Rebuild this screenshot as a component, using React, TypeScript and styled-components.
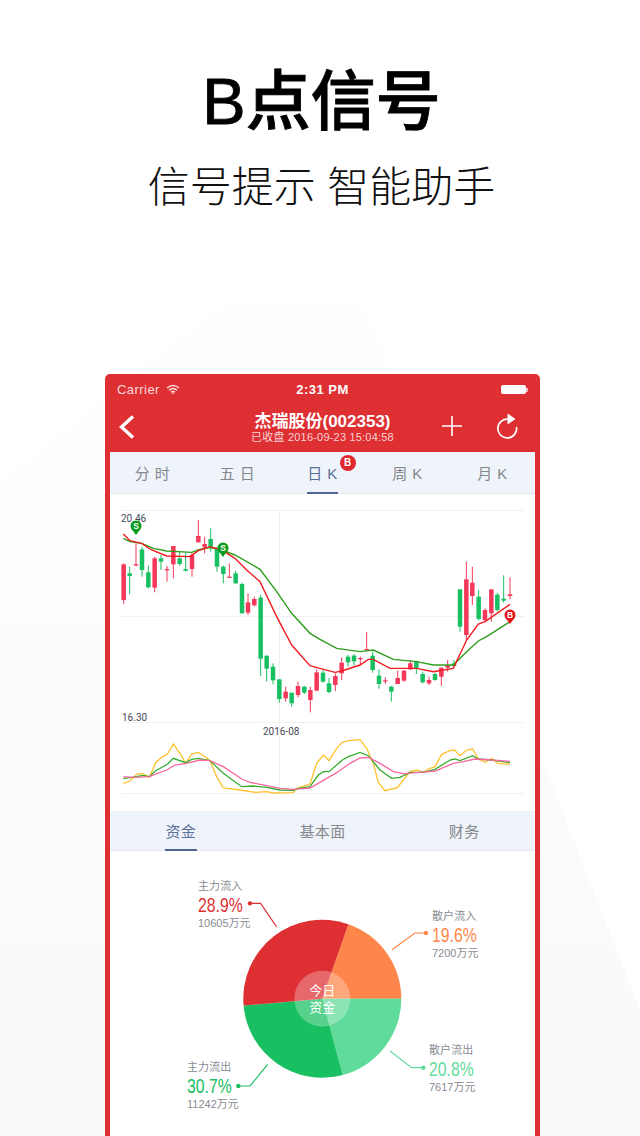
import React from "react";
import styled, { createGlobalStyle } from "styled-components";

const Global = createGlobalStyle`
  html, body { margin: 0; padding: 0; background: #fff; }
  body { font-family: "Liberation Sans", "Noto Sans CJK SC", sans-serif; }
`;

const Page = styled.div`
  position: relative;
  width: 640px;
  height: 1136px;
  overflow: hidden;
  display: flex;
  flex-direction: column;
  background: #fff;
  &::before {
    content: "";
    position: absolute;
    inset: 0;
    background: linear-gradient(180deg, #fff 19%, #fdfdfd 45%, #fafafa 85%);
    clip-path: polygon(330px 215px, 640px 1010px, 640px 1136px, 0 1136px, 0 484px);
  }
`;
const Hero = styled.header`
  position: relative;
  display: flex;
  flex-direction: column;
  align-items: center;
  padding: 62px 0 0 3px;
  height: 374px;
  box-sizing: border-box;
`;
const Title = styled.h1`
  margin: 0;
  font: 500 65px/80px "Liberation Sans", "Noto Sans CJK SC", sans-serif;
  -webkit-text-stroke: 0.9px #000;
  color: #000;
`;
const Subtitle = styled.h2`
  margin: 0;
  padding-top: 16px;
  font: 300 42px/60px "Liberation Sans", "Noto Sans CJK SC", sans-serif;
  color: #111;
`;
const Phone = styled.section`
  position: relative;
  width: 435px;
  margin-left: 105px;
  flex: 1;
  box-sizing: border-box;
  background: #de2f32;
  border-radius: 5px 5px 0 0;
  padding: 0 5px;
  display: flex;
  flex-direction: column;
`;
const StatusBar = styled.div`
  height: 31px;
  margin: 0 -5px;
  padding: 0 12px;
  display: grid;
  grid-template-columns: 1fr auto 1fr;
  align-items: center;
  color: #fff;
  font-size: 13px;
`;
const Carrier = styled.div`
  display: flex;
  align-items: center;
  gap: 6px;
  color: #fbdcdc;
  letter-spacing: 0.45px;
`;
const Clock = styled.div`
  font-weight: 700;
  letter-spacing: 0.5px;
  font-size: 13px;
`;
const Battery = styled.div`
  justify-self: end;
  display: flex;
  align-items: center;
  &::before {
    content: "";
    width: 25px;
    height: 9px;
    background: #fff;
    border-radius: 2px;
  }
  &::after {
    content: "";
    width: 2px;
    height: 4px;
    background: #f3b5b5;
  }
`;
const NavBar = styled.div`
  height: 47px;
  position: relative;
  display: flex;
  flex-direction: column;
  align-items: center;
  color: #fff;
  padding-top: 7px;
  box-sizing: border-box;
`;
const NavTitle = styled.div`
  font-size: 17px;
  font-weight: 700;
  line-height: 19px;
`;
const NavSub = styled.div`
  font-size: 11px;
  line-height: 12px;
  letter-spacing: 0.2px;
  color: #f9d2d2;
`;
const NavIcon = styled.svg<{ $left: number; $top: number }>`
  position: absolute;
  left: ${(p) => p.$left}px;
  top: ${(p) => p.$top}px;
`;
const Content = styled.div`
  flex: 1;
  background: #fff;
  display: flex;
  flex-direction: column;
`;
const Tabs = styled.div<{ $cols: number; $h: number }>`
  display: grid;
  grid-template-columns: repeat(${(p) => p.$cols}, 1fr);
  height: ${(p) => p.$h}px;
  background: #eff3fa;
  border-bottom: 1px solid #e4e7ee;
  box-sizing: border-box;
`;
const Tab = styled.div<{ $active?: boolean }>`
  position: relative;
  display: flex;
  align-items: center;
  justify-content: center;
  font-size: 15px;
  letter-spacing: 0.4px;
  color: ${(p) => (p.$active ? "#5a6f9c" : "#85888d")};
`;
const Underline = styled.span<{ $w: number }>`
  position: absolute;
  bottom: -1px;
  left: 50%;
  width: ${(p) => p.$w}px;
  margin-left: ${(p) => -p.$w / 2}px;
  height: 2px;
  background: #4f6596;
`;
const Badge = styled.span`
  position: absolute;
  left: 50%;
  top: 3px;
  margin-left: 17px;
  width: 16px;
  height: 16px;
  border-radius: 50%;
  background: #e0282e;
  color: #fff;
  font-size: 10px;
  font-weight: 700;
  line-height: 16px;
  text-align: center;
  letter-spacing: 0;
`;
const ChartSvg = styled.svg`
  display: block;
  width: 425px;
  height: 317px;
  flex: none;
`;
const AxisText = styled.text`
  font: 10px "Roboto", "Liberation Sans", sans-serif;
  fill: #444a55;
`;
const PieArea = styled.div`
  position: relative;
  flex: 1;
`;
const PieSvg = styled.svg`
  display: block;
  width: 425px;
  height: 285px;
`;
const PieCaption = styled.text`
  font: 13px "Noto Sans CJK SC", sans-serif;
  fill: #fff;
  text-anchor: middle;
`;
const Label = styled.div<{ $left: number; $top: number }>`
  position: absolute;
  left: ${(p) => p.$left}px;
  top: ${(p) => p.$top}px;
  display: flex;
  flex-direction: column;
  color: #888c93;
`;
const LabelName = styled.div`
  font-size: 11px;
  line-height: 18px;
  letter-spacing: 0.1px;
`;
const LabelPct = styled.div<{ $color: string }>`
  font: 21px/19px "Liberation Sans", sans-serif;
  color: ${(p) => p.$color};
  transform: scaleX(0.75);
  transform-origin: left center;
  white-space: nowrap;
`;
const LabelAmount = styled.div`
  font-size: 11px;
  line-height: 19px;
`;

const z = (x: number, y: number): [number, number] => [110 + x / 3, 500 + y / 3];
const pts = (a: number[][], ox = 0) => a.map(([x, y]) => z(x + ox, y).join(",")).join(" ");
const GREEN = "#18c061";
const RED = "#f5385a";

type C = [number, number, number, number, number, number];
const left: C[] = [
  [41,190,312,193,300,1],[59,200,283,220,228,0],[78,130,198,193,197,1],[96,140,230,148,210,0],[115,197,265,217,262,0],
  [134,170,277,175,263,1],[153,165,210,175,185,0],[171,198,245,207,211,1],[190,138,235,138,193,1],[209,155,197,175,192,0],
  [227,158,215,207,212,0],[246,160,230,165,207,1],[265,60,127,108,127,1],[284,110,160,132,142,1],[302,85,155,117,145,0],
  [321,140,215,145,200,0],[340,197,250,200,222,0],[358,190,233,230,233,1],[377,213,252,220,250,0],[396,248,340,252,340,0],
  [414,280,345,307,338,1],[433,290,320,297,316,1],[452,285,528,293,476,0],[470,467,545,467,506,0],[489,490,553,500,541,0],
  [508,538,608,538,597,0],[527,560,605,575,595,1],[545,578,620,578,610,0],[564,545,592,558,585,1],[583,558,582,560,578,0],
  [601,560,637,570,600,1],[620,508,572,517,572,1],
];
const right: C[] = [
  [9,510,548,518,545,0],[27,535,580,550,576,0],[46,520,573,528,555,1],[65,472,540,488,520,1],[84,465,500,470,487,0],
  [102,462,497,467,484,0],[121,470,493,474,477,1],[140,396,450,447,450,1],[158,455,518,467,510,0],[177,508,566,527,552,0],
  [196,532,552,541,544,1],[214,558,605,560,575,0],[233,512,552,534,552,1],[252,510,545,512,542,1],[271,480,510,490,508,1],
  [289,482,522,484,505,0],[308,515,550,522,547,0],[327,530,555,540,550,1],[345,518,542,522,540,0],[364,503,558,503,530,1],
  [383,480,515,495,503,1],[402,480,500,490,498,0],[420,268,395,268,380,0],[439,185,420,238,405,1],[457,200,315,248,288,1],
  [476,270,362,290,357,0],[495,325,365,330,360,1],[514,268,365,268,340,1],[532,278,335,284,330,0],[551,226,308,296,302,0],
  [570,232,298,283,288,1],
];
const candles: C[] = [...left, ...right.map((c) => [c[0] + 630, c[1], c[2], c[3], c[4], c[5]] as C)];

const maRed = [[40,102],[60,122],[95,130],[125,150],[170,168],[240,170],[265,152],[300,140],[335,150],[375,175],[410,210],[450,245],[500,350],[545,435],[600,497],[630,505],[675,517],[695,513],[750,495],[775,478],[790,478],[840,505],[920,505],[970,515],[1030,505],[1070,420],[1105,372],[1125,365],[1200,313]];
const maGreen = [[40,115],[60,125],[95,130],[130,145],[170,153],[245,157],[265,150],[300,142],[335,150],[375,165],[450,208],[500,275],[545,340],[600,400],[630,418],[680,445],[750,455],[790,450],[850,478],[920,485],[970,495],[1030,495],[1070,455],[1105,423],[1130,410],[1200,365]];

const zs = (x: number, y: number) => `${110 + x / 3},${720 + y / 3}`;
const poly = (a: number[][]) => a.map(([x, y]) => zs(x, y)).join(" ");
const subYellow = [[40,190],[60,183],[80,163],[97,160],[118,172],[137,128],[155,112],[172,103],[190,72],[210,100],[227,130],[245,102],[265,97],[285,110],[300,122],[320,170],[340,204],[390,210],[435,217],[470,215],[490,219],[550,218],[560,205],[600,192],[620,130],[640,105],[657,122],[680,85],[697,67],[715,62],[750,59],[770,85],[790,130],[805,187],[825,212],[862,203],[900,155],[920,150],[940,157],[955,147],[975,140],[995,103],[1020,92],[1033,90],[1050,107],[1070,90],[1088,87],[1105,117],[1125,127],[1145,115],[1163,130],[1200,133]];
const subGreen = [[40,176],[80,170],[97,166],[118,170],[137,152],[172,133],[190,115],[227,128],[245,118],[265,115],[300,122],[340,160],[395,200],[430,198],[470,202],[510,210],[550,211],[565,205],[600,200],[625,165],[640,155],[657,155],[697,120],[715,110],[750,97],[775,107],[810,150],[845,175],[870,172],[900,157],[940,157],[975,148],[1020,120],[1033,117],[1050,122],[1088,107],[1105,117],[1145,120],[1200,128]];
const subPink = [[40,170],[70,172],[118,170],[170,150],[195,135],[230,130],[270,120],[300,122],[340,140],[395,177],[420,187],[470,197],[510,205],[550,208],[600,204],[650,175],[680,158],[720,130],[750,114],[775,112],[810,130],[850,155],[880,161],[920,158],[975,153],[1030,130],[1060,125],[1095,117],[1145,120],[1200,124]];

function Pin({ x, y, color, letter }: { x: number; y: number; color: string; letter: string }) {
  return (
    <g>
      <path d={`M${x - 4.4} ${y + 3} L${x} ${y + 9} L${x + 4.4} ${y + 3} Z`} fill={color} />
      <circle cx={x} cy={y} r={5.5} fill={color} />
      <text x={x} y={y + 3} fontSize={8.5} fontWeight={700} fill="#fff" textAnchor="middle" fontFamily="Liberation Sans">{letter}</text>
    </g>
  );
}

const CX = 212.3;
const CY = 147.7;
const R = 79;
const wedge = (a: number, b: number) => {
  const p = (d: number) => [CX + R * Math.sin((d * Math.PI) / 180), CY - R * Math.cos((d * Math.PI) / 180)];
  const [x1, y1] = p(a);
  const [x2, y2] = p(b);
  return `M${CX} ${CY} L${x1} ${y1} A${R} ${R} 0 ${b - a > 180 ? 1 : 0} 1 ${x2} ${y2} Z`;
};
const lz = (x: number, y: number) => [60 + x / 3, 20 + y / 3];
const leader = (a: number[][]) => a.map(([x, y]) => lz(x, y).join(",")).join(" ");

const leaders = [
  { c: "#de2f32", p: [[240,97],[272,97],[320,168]] },
  { c: "#ff864a", p: [[768,186],[735,186],[666,236]] },
  { c: "#5fdb9b", p: [[760,590],[725,590],[660,540]] },
  { c: "#18c061", p: [[205,645],[240,645],[293,580]] },
];

const labels = [
  { n: "主力流入", pct: "28.9%", a: "10605万元", c: "#de2f32", x: 88, y: 26 },
  { n: "散户流入", pct: "19.6%", a: "7200万元", c: "#ff864a", x: 322, y: 56 },
  { n: "散户流出", pct: "20.8%", a: "7617万元", c: "#5fdb9b", x: 319, y: 190 },
  { n: "主力流出", pct: "30.7%", a: "11242万元", c: "#18c061", x: 77, y: 207 },
];

export default function App() {
  return (
    <Page>
      <Global />
      <Hero>
        <Title>B点信号</Title>
        <Subtitle>信号提示 智能助手</Subtitle>
      </Hero>
      <Phone>
        <StatusBar>
          <Carrier>
            Carrier
            <svg width="14" height="11" viewBox="0 0 14 11">
              <path d="M1 4 Q7 -1 13 4 M3 6.2 Q7 2.8 11 6.2 M5 8.2 Q7 6.6 9 8.2" fill="none" stroke="#fbdcdc" strokeWidth="1.4" />
              <path d="M5.8 9 L7 10.4 L8.2 9 Q7 8 5.8 9Z" fill="#fbdcdc" />
            </svg>
          </Carrier>
          <Clock>2:31 PM</Clock>
          <Battery />
        </StatusBar>
        <NavBar>
          <NavIcon $left={5} $top={9} width="22" height="26" viewBox="0 0 22 26">
            <path d="M18 2.5 L6.5 13 L18 23.5" fill="none" stroke="#fff" strokeWidth="3.4" />
          </NavIcon>
          <NavTitle>杰瑞股份(002353)</NavTitle>
          <NavSub>已收盘 2016-09-23 15:04:58</NavSub>
          <NavIcon $left={326} $top={9} width="32" height="24" viewBox="0 0 32 24">
            <path d="M16 2 V22 M6 12 H26" fill="none" stroke="#fff" strokeWidth="1.6" />
          </NavIcon>
          <NavIcon $left={383} $top={6} width="28" height="28" viewBox="0 0 28 28">
            <path d="M15.5 8.2 A9.4 9.4 0 1 0 23.5 16" fill="none" stroke="#fff" strokeWidth="1.7" />
            <path d="M14.5 2.5 L22.5 8 L14.5 13.5 Z" fill="#fff" />
          </NavIcon>
        </NavBar>
        <Content>
          <Tabs $cols={5} $h={42}>
            <Tab>分 时</Tab>
            <Tab>五 日</Tab>
            <Tab $active>
              日 K<Badge>B</Badge>
              <Underline $w={31} />
            </Tab>
            <Tab>周 K</Tab>
            <Tab>月 K</Tab>
          </Tabs>
          <ChartSvg viewBox="110 494 425 317">
            <g stroke="#f1f1f2" strokeWidth="1">
              <line x1="122" x2="524" y1="510.5" y2="510.5" />
              <line x1="122" x2="524" y1="616.5" y2="616.5" />
              <line x1="122" x2="524" y1="722.5" y2="722.5" />
              <line x1="122" x2="524" y1="793.5" y2="793.5" />
              <line x1="279.5" x2="279.5" y1="510" y2="794" />
            </g>
            {candles.map(([x, wt, wb, bt, bb, up], i) => {
              const [px, t] = z(x, wt);
              const [, b] = z(x, wb);
              const [, bodyT] = z(x, bt);
              const [, bodyB] = z(x, bb);
              const col = up ? RED : GREEN;
              return (
                <g key={i}>
                  <line x1={px} x2={px} y1={t} y2={b} stroke={col} strokeWidth="1" />
                  <rect x={px - 2.25} y={bodyT} width={4.5} height={Math.max(bodyB - bodyT, 1.2)} fill={col} />
                </g>
              );
            })}
            <polyline points={pts(maGreen)} fill="none" stroke="#2f9e1f" strokeWidth="1.4" />
            <polyline points={pts(maRed)} fill="none" stroke="#f21b1f" strokeWidth="1.4" />
            <AxisText x="121" y="522">20.46</AxisText>
            <AxisText x="122" y="721">16.30</AxisText>
            <AxisText x="263" y="735">2016-08</AxisText>
            <Pin x={136} y={526} color="#0c9a1c" letter="S" />
            <Pin x={223} y={548} color="#0c9a1c" letter="S" />
            <Pin x={510} y={615} color="#e8141c" letter="B" />
            <polyline points={poly(subYellow)} fill="none" stroke="#fdc22d" strokeWidth="1.3" />
            <polyline points={poly(subGreen)} fill="none" stroke="#37ad2d" strokeWidth="1.3" />
            <polyline points={poly(subPink)} fill="none" stroke="#f9679d" strokeWidth="1.3" />
          </ChartSvg>
          <Tabs $cols={3} $h={40}>
            <Tab $active>
              资金
              <Underline $w={32} />
            </Tab>
            <Tab>基本面</Tab>
            <Tab>财务</Tab>
          </Tabs>
          <PieArea>
            <PieSvg viewBox="0 0 425 285">
              <path d={wedge(19.3, 90)} fill="#ff864a" />
              <path d={wedge(90, 165)} fill="#5fdb9b" />
              <path d={wedge(165, 265)} fill="#18c061" />
              <path d={wedge(265, 379.3)} fill="#de2f32" />
              <circle cx={CX} cy={CY} r={28} fill="#fff" fillOpacity="0.28" />
              <PieCaption x={CX} y={CY - 4}>今日</PieCaption>
              <PieCaption x={CX} y={CY + 13}>资金</PieCaption>
              {leaders.map((l, i) => {
                const [dx, dy] = lz(l.p[0][0], l.p[0][1]);
                return (
                  <g key={i}>
                    <polyline points={leader(l.p)} fill="none" stroke={l.c} strokeWidth="1.2" />
                    <circle cx={dx} cy={dy} r={2.2} fill={l.c} />
                  </g>
                );
              })}
            </PieSvg>
            {labels.map((l) => (
              <Label key={l.n} $left={l.x} $top={l.y}>
                <LabelName>{l.n}</LabelName>
                <LabelPct $color={l.c}>{l.pct}</LabelPct>
                <LabelAmount>{l.a}</LabelAmount>
              </Label>
            ))}
          </PieArea>
        </Content>
      </Phone>
    </Page>
  );
}
